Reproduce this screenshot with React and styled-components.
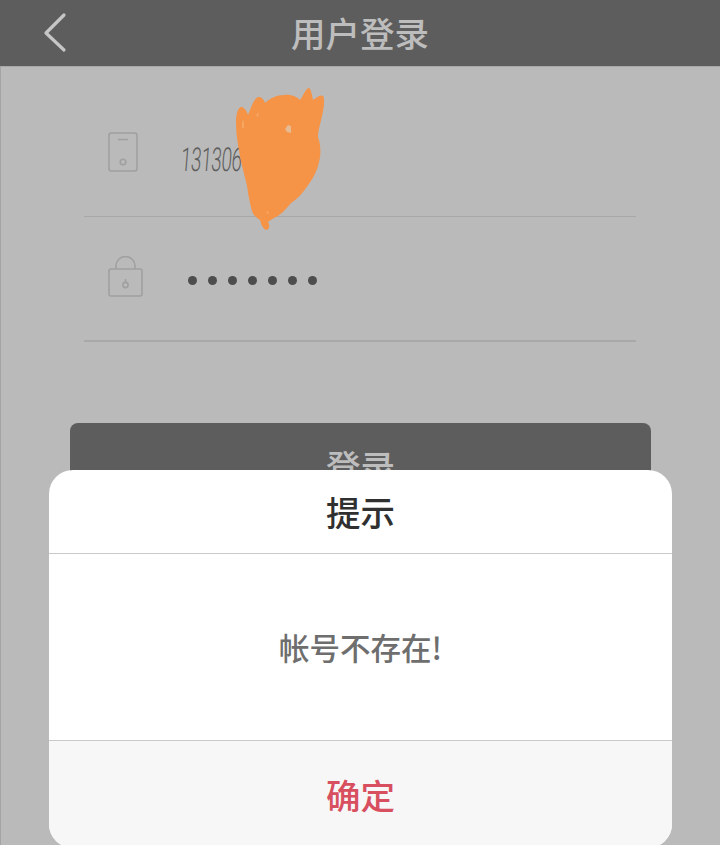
import styled, { createGlobalStyle } from "styled-components";

const cjk = `"Noto Sans CJK SC", "Liberation Sans", sans-serif`;

const GlobalStyle = createGlobalStyle`
    html, body {
        margin: 0;
        padding: 0;
        background: #bababa;
    }
`

const Page = styled.div`
    position: relative;
    width: 720px;
    height: 845px;
    overflow: hidden;
    background: #bababa;
    font-family: ${cjk};
    box-shadow: inset 1px 0 #a4a4a4;
`

const Header = styled.header`
    position: relative;
    height: 66px;
    display: flex;
    align-items: center;
    justify-content: center;
    background: #5e5d5e;
    border-bottom: 1px solid #a8a8a8;
`

const BackIcon = styled.svg`
    position: absolute;
    left: 40px;
    top: 10px;
    width: 32px;
    height: 46px;
`

const Title = styled.h1`
    margin: -3px 0 0;
    font-size: 34.5px;
    line-height: 66px;
    font-weight: 500;
    color: #bdbdbd;
`

const Form = styled.div`
    padding: 0 84px 0 84px;
`

const Row = styled.div`
    box-sizing: border-box;
    height: ${(props) => props.$height}px;
    padding: ${(props) => props.$top}px 0 0 24px;
    display: flex;
    align-items: flex-start;
    border-bottom: ${(props) => props.$line}px solid #a8a8a8;
`

const IconBox = styled.svg`
    flex: none;
    display: block;
`

const Phone = styled.div`
    margin: 10px 0 0 43px;
    font-family: "Roboto", "Liberation Sans", sans-serif;
    font-size: 33px;
    line-height: 36px;
    font-weight: 300;
    letter-spacing: -0.5px;
    color: #5f5f5f;
    transform-origin: left center;
    transform: scaleX(0.57) skewX(-8deg);
`

const Dots = styled.div`
    margin: 20px 0 0 44px;
    display: flex;
    gap: 11px;
`

const Dot = styled.span`
    width: 9px;
    height: 9px;
    border-radius: 50%;
    background: #4d4d4d;
`

const LoginButton = styled.button`
    display: block;
    width: 581px;
    height: 85px;
    margin: 81px 0 0 70px;
    padding: 0;
    border: none;
    border-radius: 8px;
    background: #5e5d5e;
    color: #bdbdbd;
    font-family: ${cjk};
    font-size: 34.5px;
    font-weight: 500;
    line-height: 85px;
`

const Scribble = styled.svg`
    position: absolute;
    left: 0;
    top: 0;
    width: 720px;
    height: 260px;
`

const Dialog = styled.div`
    position: absolute;
    left: 49px;
    top: 470px;
    width: 623px;
    height: 378px;
    display: flex;
    flex-direction: column;
    border-radius: 24px;
    overflow: hidden;
    background: #fff;
`

const DialogTitle = styled.div`
    height: 83px;
    line-height: 83px;
    text-align: center;
    font-size: 34.5px;
    font-weight: 500;
    color: #303030;
    border-bottom: 1px solid #c9c9c9;
`

const DialogBody = styled.div`
    height: 186px;
    line-height: 186px;
    text-align: center;
    font-size: 30.5px;
    font-weight: 500;
    color: #6e6e6e;
    border-bottom: 1px solid #c9c9c9;
`

const DialogFooter = styled.div`
    flex: 1;
    padding-top: 21px;
    line-height: 64px;
    text-align: center;
    font-size: 34.5px;
    font-weight: 500;
    color: #d8505f;
    background: #f7f7f7;
`

const App = () => {
    return (
        <Page>
            <GlobalStyle />
            <Header>
                <BackIcon viewBox="0 0 32 46">
                    <path d="M24 5 L6 23 L24 40" fill="none" stroke="#c6c6c6" strokeWidth="3.2" strokeLinecap="round" strokeLinejoin="round" />
                </BackIcon>
                <Title>用户登录</Title>
            </Header>
            <Form>
                <Row $height={150} $top={65} $line={1}>
                    <IconBox width="30" height="40" viewBox="0 0 30 40" fill="none" stroke="#a0a0a0" strokeWidth="1.6">
                        <rect x="1" y="1" width="28" height="38" rx="2.5" />
                        <path d="M10 7.5 H20" />
                        <circle cx="15" cy="30" r="2.8" />
                    </IconBox>
                    <Phone>131306</Phone>
                </Row>
                <Row $height={125} $top={39} $line={2}>
                    <IconBox width="36" height="41" viewBox="0 0 36 41" fill="none" stroke="#a0a0a0" strokeWidth="1.6">
                        <rect x="1" y="13" width="33" height="27" rx="2" />
                        <path d="M8 13 V10 A9.5 9.5 0 0 1 27 10 V13" />
                        <circle cx="17.5" cy="29" r="2.6" />
                        <path d="M17.5 26.5 V23" />
                    </IconBox>
                    <Dots>
                        {[0, 1, 2, 3, 4, 5, 6].map((i) => (
                            <Dot key={i} />
                        ))}
                    </Dots>
                </Row>
            </Form>
            <LoginButton>登录</LoginButton>
            <Scribble viewBox="0 0 720 260">
                <path
                    fill="#f59347"
                    d="M236 122 C236 112 239 106 242 107 C245 108 247 112 248 115 C251 108 254 97 259 97 C262 97 264 100 265 103 C270 98 277 95 284 95 C291 94 297 97 300 100 C303 96 306 88 309 88 C311 89 312 95 313 100 C316 98 320 94 323 96 C325 98 324 108 322 116 C320 125 318 131 318 137 C321 145 321 155 319 162 C317 172 312 180 306 188 C301 195 297 199 291 203 C286 209 281 215 274 218 C271 220 269 221 268 222 C270 225 270 229 266 230 C263 229 261 224 260 220 C256 217 253 215 252 211 C249 200 248 192 247 186 C244 172 240 160 239 150 C237 140 236 131 236 122 Z"
                />
                <path fill="#e6bb94" d="M285 129 L288 125 L291 126 L291 133 L287 132 Z" />
                <path fill="#f7a563" d="M242 122 L244 120 L244 128 L242 128 Z M256 115 L259 112 L258 118 Z M266 212 L269 211 L268 215 Z" />
            </Scribble>
            <Dialog>
                <DialogTitle>提示</DialogTitle>
                <DialogBody>帐号不存在!</DialogBody>
                <DialogFooter>确定</DialogFooter>
            </Dialog>
        </Page>
    )
}

export default App
